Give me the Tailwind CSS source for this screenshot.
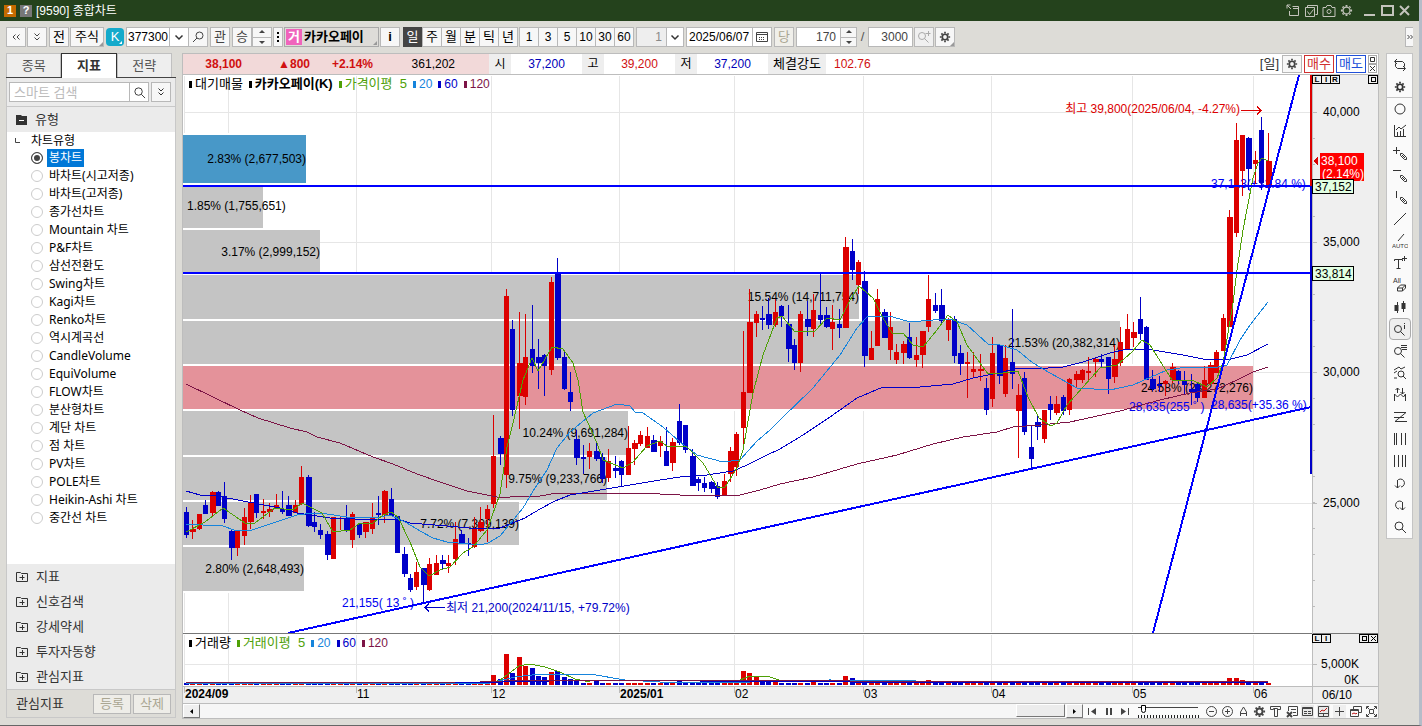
<!DOCTYPE html>
<html lang="ko">
<head>
    <meta charset="UTF-8">
    <meta name="viewport" content="width=device-width, initial-scale=1.0">
    <title>[9590] 종합차트</title>
    <script src="https://cdn.jsdelivr.net/npm/@tailwindcss/browser@4"></script>
</head>
<body class="bg-[#dddcd7] font-['Liberation_Sans','Noto_Sans_CJK_KR',sans-serif] text-xs text-black">
    <!-- Icon set -->
    <svg class="hidden">
        <defs>
            <symbol id="gear" viewBox="0 0 14 14"><g fill="none" stroke="currentColor"><circle cx="7" cy="7" r="3.2" stroke-width="2"/><path stroke-width="2" d="M7 1v2M7 11v2M1 7h2M11 7h2M2.8 2.8l1.4 1.4M9.8 9.8l1.4 1.4M11.2 2.8L9.8 4.2M4.2 9.8l-1.4 1.4"/></g></symbol>
            <symbol id="gear-thin" viewBox="0 0 14 14"><g fill="none" stroke="currentColor"><circle cx="7" cy="7" r="3.7" stroke-width="1.3"/><path stroke-width="2" d="M7 1v2M7 11v2M1 7h2M11 7h2M2.8 2.8l1 1M10.2 10.2l1 1M11.2 2.8l-1 1M3.8 10.2l-1 1"/></g></symbol>
            <symbol id="search" viewBox="0 0 14 14"><g fill="none" stroke="currentColor"><circle cx="6" cy="6" r="4"/><path d="M9 9l4 4"/></g></symbol>
            <symbol id="search-left" viewBox="0 0 14 14"><g fill="none" stroke="currentColor"><circle cx="8.5" cy="5.5" r="3.5"/><path d="M6 8l-4 4"/></g></symbol>
            <symbol id="dbl-down" viewBox="0 0 14 14"><path fill="none" stroke="currentColor" d="M4.5 3.5L7 6l2.500-2.500M4.500 7.500L7 10l2.500-2.500"/></symbol>
            <symbol id="dbl-left" viewBox="0 0 14 14"><path fill="none" stroke="currentColor" d="M6.500 4.500L4 7l2.500 2.500M10.500 4.500L8 7l2.500 2.500"/></symbol>
            <symbol id="dbl-right" viewBox="0 0 14 14"><path fill="none" stroke="currentColor" d="M4.500 5L6.500 7 4.500 9M7.500 5L9.500 7 7.500 9"/></symbol>
            <symbol id="chevron" viewBox="0 0 14 14"><path fill="none" stroke="currentColor" stroke-width="1.500" d="M3.500 5.500L7 9l3.500-3.500"/></symbol>
            <symbol id="plus-box" viewBox="0 0 12 12"><path fill="none" stroke="currentColor" d="M.5 1.500h4l1 1h6v8H.5zM3.500 6.500h5M6.500 4v5"/></symbol>
            <symbol id="corner" viewBox="0 0 4 4"><path fill="#999" d="M4 0v4H0z"/></symbol>
        </defs>
    </svg>

    <div class="flex min-h-screen flex-col border-r-[3px] border-b border-r-[#b5bcc8] border-b-[#666]">
        <!-- Title bar -->
        <header class="flex h-[21px] items-center bg-[#24421c] pr-2 pl-1 text-white">
            <span class="flex size-3 items-center justify-center bg-[#c46a00] text-[11px] font-bold">1</span>
            <span class="ml-1 flex size-3 items-center justify-center bg-[#777] text-[11px] font-bold">?</span>
            <h1 class="ml-1 text-xs">[9590] 종합차트</h1>
            <div class="ml-auto flex items-center gap-1 text-[#c4c4bc]">
                <button aria-label="분리"><svg class="size-[14px]" viewBox="0 0 14 14" fill="none" stroke="currentColor"><path d="M6.500 2.500h6v9h-9V7M7 4.500h6M1 1l4 4M1 4.500V1h3.500"/></svg></button>
                <button aria-label="저장"><svg class="size-[14px]" viewBox="0 0 14 14" fill="none" stroke="currentColor"><path d="M3.500 3.500v-2h10v9h-2M1.500 3.500h9v9h-9zM3.500 7.500l2 3 4-5"/></svg></button>
                <button aria-label="화면 캡처"><svg class="size-[14px]" viewBox="0 0 14 14" fill="none" stroke="currentColor"><path d="M1 12.500v-9h3l1-2h4l1 2h3v9z"/><circle cx="7" cy="7.500" r="2"/></svg></button>
                <button aria-label="설정"><svg class="size-[13px]"><use href="#gear-thin"/></svg></button>
                <button aria-label="최소화" class="ml-[6px]"><svg class="size-[13px]" viewBox="0 0 13 13"><path fill="currentColor" d="M1 10h11v2H1z"/></svg></button>
                <button aria-label="최대화" class="ml-px"><svg class="size-[13px]" viewBox="0 0 13 13" fill="none" stroke="currentColor" stroke-width="2"><path d="M1 2h11v9H1z"/></svg></button>
                <button aria-label="닫기"><svg class="size-[13px]" viewBox="0 0 13 13" fill="none" stroke="currentColor" stroke-width="2"><path d="M2 2l9 9M11 2l-9 9"/></svg></button>
            </div>
        </header>

        <!-- Toolbar -->
        <div class="flex h-8 items-center pl-[6px] text-[13px]">
            <button aria-label="이전" class="flex h-5 w-5 items-center justify-center border border-[#b8b8b8] bg-[#f7f7f7] text-[#444]"><svg class="size-[14px]"><use href="#dbl-left"/></svg></button>
            <button aria-label="펼치기" class="ml-px flex h-5 w-5 items-center justify-center border border-[#b8b8b8] bg-[#f7f7f7] text-[#444]"><svg class="size-[14px]"><use href="#dbl-down"/></svg></button>
            <button class="ml-[2px] h-5 w-5 border border-[#b8b8b8] bg-[#f7f7f7] leading-[18px]">전</button>
            <button class="relative ml-px h-5 w-[34px] border border-[#b8b8b8] bg-[#f7f7f7] leading-[18px]">주식<svg class="absolute right-0 bottom-0 size-1"><use href="#corner"/></svg></button>
            <button class="relative ml-[2px] h-[18px] w-[18px] rounded bg-[#14aacb] leading-[18px] text-white">K<svg class="absolute right-[2px] bottom-[2px] size-[3px]" viewBox="0 0 4 4"><path fill="#fff" d="M4 0v4H0z"/></svg></button>
            <input type="text" aria-label="종목코드" value="377300" class="ml-[2px] h-5 w-[44px] border border-[#b8b8b8] bg-white pl-px text-xs">
            <button aria-label="종목 목록" class="-ml-px flex h-5 w-5 items-center justify-center border border-[#b8b8b8] bg-white text-[#333]"><svg class="size-[14px]"><use href="#chevron"/></svg></button>
            <button aria-label="종목 찾기" class="-ml-px flex h-5 w-5 items-center justify-center border border-[#b8b8b8] bg-[#f7f7f7] text-[#444]"><svg class="size-[14px]"><use href="#search-left"/></svg></button>
            <button class="ml-[2px] h-5 w-5 border border-[#b8b8b8] bg-[#f7f7f7] leading-[18px] text-[#444]">관</button>
            <button class="ml-[2px] h-5 w-5 border border-[#b8b8b8] bg-[#f7f7f7] leading-[18px] text-[#444]">승</button>
            <div class="flex h-5 w-5 flex-col border border-[#b8b8b8] bg-[#f7f7f7] text-[#444]">
                <button aria-label="위" class="flex flex-1 items-center justify-center border-b border-[#b8b8b8]"><svg class="h-1 w-2" viewBox="0 0 8 4"><path fill="currentColor" d="M4 0l3 3H1z"/></svg></button>
                <button aria-label="아래" class="flex flex-1 items-center justify-center"><svg class="h-1 w-2" viewBox="0 0 8 4"><path fill="currentColor" d="M4 4l3-3H1z"/></svg></button>
            </div>
            <button aria-label="더보기" class="ml-px flex h-5 w-[10px] items-center justify-center border border-[#b8b8b8] bg-[#f7f7f7]"><svg class="h-3 w-[2px]" viewBox="0 0 2 12"><path d="M0 1h2v2H0zM0 5h2v2H0zM0 9h2v2H0z"/></svg></button>
            <button class="relative ml-px flex h-5 w-[95px] items-center overflow-hidden border border-[#a8a8a8] bg-[#dedcd8] font-bold"><span class="ml-px mr-[2px] flex h-4 w-4 items-center justify-center bg-[#f064bc] text-white">거</span>카카오페이<svg class="absolute right-px bottom-px size-1"><use href="#corner"/></svg></button>
            <button class="ml-px h-5 w-5 border border-[#b8b8b8] bg-[#f7f7f7] font-bold leading-[18px]">i</button>

            <!-- Period -->
            <div class="ml-[3px] flex">
                <button class="h-5 w-[19px] bg-[#444] text-white">일</button>
                <button class="h-5 w-[19px] border border-r-0 border-[#b8b8b8] bg-[#f7f7f7] leading-[18px]">주</button>
                <button class="h-5 w-[19px] border border-r-0 border-[#b8b8b8] bg-[#f7f7f7] leading-[18px]">월</button>
                <button class="h-5 w-[19px] border border-r-0 border-[#b8b8b8] bg-[#f7f7f7] leading-[18px]">분</button>
                <button class="h-5 w-[19px] border border-r-0 border-[#b8b8b8] bg-[#f7f7f7] leading-[18px]">틱</button>
                <button class="h-5 w-5 border border-[#b8b8b8] bg-[#f7f7f7] leading-[18px]">년</button>
            </div>
            <div class="ml-px flex text-xs">
                <button class="h-5 w-[19px] border border-r-0 border-[#b8b8b8] bg-[#f7f7f7]">1</button>
                <button class="h-5 w-[19px] border border-r-0 border-[#b8b8b8] bg-[#f7f7f7]">3</button>
                <button class="h-5 w-[19px] border border-r-0 border-[#b8b8b8] bg-[#f7f7f7]">5</button>
                <button class="h-5 w-[19px] border border-r-0 border-[#b8b8b8] bg-[#f7f7f7]">10</button>
                <button class="h-5 w-[19px] border border-r-0 border-[#b8b8b8] bg-[#f7f7f7]">30</button>
                <button class="h-5 w-5 border border-[#b8b8b8] bg-[#f7f7f7]">60</button>
            </div>
            <input type="text" aria-label="분 간격" value="1" disabled class="ml-[2px] h-5 w-[31px] border border-[#b8b8b8] bg-[#eee] pr-1 text-right text-xs text-[#888]">
            <button aria-label="분 간격 목록" class="-ml-px flex h-5 w-[18px] items-center justify-center border border-[#b8b8b8] bg-white text-[#333]"><svg class="size-[14px]"><use href="#chevron"/></svg></button>
            <input type="text" aria-label="기준일" value="2025/06/07" class="ml-[2px] h-5 w-[67px] border border-[#b8b8b8] bg-white pl-[2px] text-xs">
            <button aria-label="달력" class="-ml-px flex h-5 w-5 items-center justify-center border border-[#b8b8b8] bg-white text-[#444]"><svg class="size-3" viewBox="0 0 12 12" fill="none" stroke="currentColor"><path d="M.5 1.500h11v9H.5zM1 3.500h10"/><path stroke-dasharray="1 1" d="M3 6.500h6M3 8.500h6"/></svg></button>
            <button disabled class="ml-[2px] h-5 w-5 border border-[#b8b8b8] bg-[#f0efea] leading-[18px] text-[#aaa692]">당</button>
            <input type="text" aria-label="조회 개수" value="170" class="ml-[2px] h-5 w-[45px] border border-[#b8b8b8] bg-white pr-1 text-right text-xs text-[#444]">
            <div class="-ml-px flex h-5 w-[17px] flex-col border border-[#b8b8b8] bg-[#f7f7f7] text-[#444]">
                <button aria-label="늘리기" class="flex flex-1 items-center justify-center border-b border-[#b8b8b8]"><svg class="h-1 w-2" viewBox="0 0 8 4"><path fill="currentColor" d="M4 0l3 3H1z"/></svg></button>
                <button aria-label="줄이기" class="flex flex-1 items-center justify-center"><svg class="h-1 w-2" viewBox="0 0 8 4"><path fill="currentColor" d="M4 4l3-3H1z"/></svg></button>
            </div>
            <span class="w-[11px] text-center text-[#555]">/</span>
            <input type="text" aria-label="전체 개수" value="3000" class="h-5 w-[45px] border border-[#b8b8b8] bg-white pr-1 text-right text-xs text-[#444]">
            <button aria-label="추가 조회" class="ml-px flex h-5 w-5 items-center justify-center border border-[#b8b8b8] bg-[#f0f0f0] text-[#aaa]"><svg class="size-[14px]" viewBox="0 0 14 14" fill="none" stroke="currentColor"><circle cx="5" cy="6" r="3.500"/><path d="M7.500 8.500l4 4M8.500 3.500h5M11.500 1v5"/></svg></button>
            <button aria-label="차트 설정" class="relative ml-px flex h-5 w-5 items-center justify-center border border-[#b8b8b8] bg-[#f7f7f7] text-[#444]"><svg class="size-3"><use href="#gear"/></svg><svg class="absolute right-0 bottom-0 size-1"><use href="#corner"/></svg></button>
            <button aria-label="더 보기" class="ml-auto mr-[6px] flex h-5 w-2 items-center justify-center overflow-hidden border border-r-0 border-[#b8b8b8] bg-[#f7f7f7] text-[#444]"><svg class="size-[14px] shrink-0"><use href="#dbl-right"/></svg></button>
        </div>

        <div class="flex flex-1 items-start pl-[6px]">
            <!-- Sidebar -->
            <aside class="flex w-[170px] shrink-0 flex-col text-[#333]">
                <nav class="flex h-[25px] items-stretch border-b border-[#444] pr-1 text-[13px]">
                    <button class="flex-1 border border-b-0 border-[#c0c0c0] bg-[#eee] text-[#555]">종목</button>
                    <button class="-mb-px flex-1 border border-b-0 border-[#333] bg-white font-bold">지표</button>
                    <button class="flex-1 border border-b-0 border-[#c0c0c0] bg-[#eee] text-[#555]">전략</button>
                </nav>
                <div class="flex flex-col border-x border-b border-[#c8c8c8]">
                    <div class="flex items-center bg-[#ebebeb] py-1 pr-1 pl-[2px]">
                        <input type="text" aria-label="검색" placeholder="스마트 검색" class="h-5 w-0 flex-1 border border-[#b8b8b8] bg-white pl-1 text-[13px] placeholder:text-[#bbb]">
                        <button aria-label="검색" class="-ml-px flex h-5 w-5 items-center justify-center border border-[#b8b8b8] bg-white"><svg class="size-[13px]"><use href="#search"/></svg></button>
                        <button aria-label="펼치기" class="ml-[2px] flex h-5 w-5 items-center justify-center border border-[#b8b8b8] bg-[#f7f7f7]"><svg class="size-[14px]"><use href="#dbl-down"/></svg></button>
                    </div>
                    <h2 class="flex h-[26px] items-center border-t border-[#c8c8c8] bg-[#ebebeb] pl-[9px] text-[13px]">
                        <svg class="mr-2 h-[10px] w-[11px]" viewBox="0 0 11 10"><path fill="#333" d="M0 0h5l1 1h5v9H0z"/><path stroke="#fff" d="M3 5.500h5"/></svg>유형
                    </h2>
                    <div role="radiogroup" aria-labelledby="type-title" class="flex h-[432px] flex-col bg-white font-['Noto_Sans','Noto_Sans_CJK_KR',sans-serif] text-xs text-black">
                        <p class="flex h-[17px] items-center"><svg class="mr-[11px] ml-2 size-[5px]" viewBox="0 0 5 5"><path fill="none" stroke="#444" d="M.5 0v4.500H5"/></svg><span id="type-title">차트유형</span></p>
                        <div id="chart-types" class="pl-6"></div>
                    </div>
                    <ul class="bg-[#ebebeb] text-[13px]">
                        <li><button class="flex h-[25px] w-full items-center gap-2 pl-[9px]"><svg class="size-3"><use href="#plus-box"/></svg>지표</button></li>
                        <li><button class="flex h-[25px] w-full items-center gap-2 pl-[9px]"><svg class="size-3"><use href="#plus-box"/></svg>신호검색</button></li>
                        <li><button class="flex h-[25px] w-full items-center gap-2 pl-[9px]"><svg class="size-3"><use href="#plus-box"/></svg>강세약세</button></li>
                        <li><button class="flex h-[25px] w-full items-center gap-2 pl-[9px]"><svg class="size-3"><use href="#plus-box"/></svg>투자자동향</button></li>
                        <li><button class="flex h-[25px] w-full items-center gap-2 pl-[9px]"><svg class="size-3"><use href="#plus-box"/></svg>관심지표</button></li>
                    </ul>
                    <div class="flex h-[28px] items-center gap-[2px] border-t border-[#c8c8c8] pr-1 pl-[9px] text-[13px]">
                        <span class="mr-auto">관심지표</span>
                        <button disabled class="h-5 w-[38px] border border-[#b8b8b8] bg-[#eeede8] leading-[18px] text-[#aaa692]">등록</button>
                        <button disabled class="h-5 w-[38px] border border-[#b8b8b8] bg-[#eeede8] leading-[18px] text-[#aaa692]">삭제</button>
                    </div>
                </div>
            </aside>

            <!-- Chart window -->
            <main class="ml-[6px] flex min-w-0 flex-1 flex-col border border-[#bdbdbd] bg-white">
                <!-- Quote line -->
                <div class="flex h-[21px] items-stretch border-b border-[#bdbdbd] leading-5">
                    <div class="flex w-[306px] bg-[#f2d9d9]">
                        <b class="w-[59px] text-right text-[#d01010]">38,100</b>
                        <b class="w-[68px] text-right text-[#d01010]">▲800</b>
                        <b class="w-[63px] text-right text-[#d01010]">+2.14%</b>
                        <span class="w-[82px] text-right">361,202</span>
                    </div>
                    <span class="w-[22px] bg-[#eee] text-center">시</span><span class="w-[71px] text-center text-[#0000b8]">37,200</span>
                    <span class="w-[22px] bg-[#eee] text-center">고</span><span class="w-[71px] text-center text-[#d01010]">39,200</span>
                    <span class="w-[22px] bg-[#eee] text-center">저</span><span class="w-[71px] text-center text-[#0000b8]">37,200</span>
                    <span class="w-[58px] bg-[#eee] text-center text-[13px]">체결강도</span><span class="pl-2 text-[#d01010]">102.76</span>
                    <div class="ml-auto flex items-center gap-[2px] pr-px text-[13px]">
                        <span class="mr-px text-[#333]">[일]</span>
                        <button aria-label="설정" class="flex h-[18px] w-5 items-center justify-center border border-[#b8b8b8] bg-[#f7f7f7] text-[#444]"><svg class="size-3"><use href="#gear"/></svg></button>
                        <button class="h-[18px] w-[30px] border border-[#d03030] leading-4 text-[#d03030]">매수</button>
                        <button class="h-[18px] w-[30px] border border-[#2050d8] leading-4 text-[#2050d8]">매도</button>
                        <div class="flex flex-col">
                            <button aria-label="확대" class="flex h-[9px] w-[9px] items-center justify-center border border-[#aaa]"><svg class="size-[5px]" viewBox="0 0 5 5"><path fill="none" stroke="#333" d="M.5.5h4v4h-4z"/></svg></button>
                            <button aria-label="닫기" class="flex h-[9px] w-[9px] items-center justify-center border border-[#aaa]"><svg class="size-[5px]" viewBox="0 0 5 5"><path stroke="#333" d="M0 0l5 5M5 0L0 5"/></svg></button>
                        </div>
                    </div>
                </div>

                <!-- Price and volume panes -->
                <div class="relative">
                    <svg id="chart" class="block h-auto w-full" viewBox="183 75 1195 629" font-size="12"></svg>
                    <div class="absolute top-0 left-[6px] flex items-center gap-[6px] text-[13px] leading-[18px]">
                        <span class="flex items-center gap-[3px]"><i class="h-[7px] w-[3px] bg-black"></i>대기매물</span>
                        <b class="flex items-center gap-[3px]"><i class="h-[7px] w-[3px] bg-black"></i>카카오페이(K)</b>
                        <span class="flex items-center gap-[3px] text-[#4ea006]"><i class="h-[7px] w-[3px] bg-[#4ea006]"></i>가격이평&nbsp; 5</span>
                        <span class="flex items-center gap-[3px] text-xs text-[#1684dc]"><i class="h-[7px] w-[3px] bg-[#1684dc]"></i>20</span>
                        <span class="flex items-center gap-[3px] text-xs text-[#0000c8]"><i class="h-[7px] w-[3px] bg-[#0000c8]"></i>60</span>
                        <span class="flex items-center gap-[3px] text-xs text-[#7c1446]"><i class="h-[7px] w-[3px] bg-[#7c1446]"></i>120</span>
                    </div>
                    <div class="absolute bottom-[52px] left-[6px] flex items-center gap-[6px] text-[13px] leading-[18px]">
                        <span class="flex items-center gap-[3px]"><i class="h-[7px] w-[3px] bg-black"></i>거래량</span>
                        <span class="flex items-center gap-[3px] text-[#4ea006]"><i class="h-[7px] w-[3px] bg-[#4ea006]"></i>거래이평&nbsp; 5</span>
                        <span class="flex items-center gap-[3px] text-xs text-[#1684dc]"><i class="h-[7px] w-[3px] bg-[#1684dc]"></i>20</span>
                        <span class="flex items-center gap-[3px] text-xs text-[#0000c8]"><i class="h-[7px] w-[3px] bg-[#0000c8]"></i>60</span>
                        <span class="flex items-center gap-[3px] text-xs text-[#7c1446]"><i class="h-[7px] w-[3px] bg-[#7c1446]"></i>120</span>
                    </div>
                    <div class="absolute top-0 right-0 flex w-[66px] justify-between text-[8px] leading-[7px] font-bold">
                        <span class="flex"><button class="h-[9px] w-[10px] border border-black">L</button><button class="-ml-px h-[9px] w-[10px] border border-black">I</button><button class="-ml-px h-[9px] w-[10px] border border-black">R</button></span>
                        <button aria-label="확대" class="flex h-[9px] w-[10px] items-center justify-center border border-black"><i class="size-[5px] border border-black"></i></button>
                    </div>
                    <div class="absolute right-0 bottom-[61px] flex w-[66px] justify-between text-[8px] leading-[7px] font-bold">
                        <span class="flex"><button class="h-[9px] w-[10px] border border-black">L</button><button class="-ml-px h-[9px] w-[10px] border border-black">I</button></span>
                        <span class="flex"><button aria-label="확대" class="flex h-[9px] w-[10px] items-center justify-center border border-black"><i class="size-[5px] border border-black"></i></button><button aria-label="닫기" class="-ml-px flex h-[9px] w-[10px] items-center justify-center border border-black"><svg class="size-[5px]" viewBox="0 0 5 5"><path stroke="#000" d="M0 0l5 5M5 0L0 5"/></svg></button></span>
                    </div>
                </div>

                <!-- Scroll bar and view tools -->
                <div class="flex h-[14px] items-center bg-[#fafafa] text-[#444]">
                    <button aria-label="왼쪽" class="flex h-[14px] w-[17px] items-center justify-center border border-t-white border-r-[#777] border-b-[#777] border-l-white bg-[#efefef]"><svg class="size-[5px]" viewBox="0 0 5 5"><path d="M4 0v5L1 2.500z"/></svg></button>
                    <div class="flex h-[14px] flex-1 justify-end bg-[#f6f6f6]"><div class="h-[13px] w-[49px] border border-t-white border-r-[#777] border-b-[#777] border-l-white bg-[#ececec]"></div></div>
                    <button aria-label="오른쪽" class="ml-px flex h-[14px] w-[17px] items-center justify-center border border-t-white border-r-[#777] border-b-[#777] border-l-white bg-[#efefef]"><svg class="size-[5px]" viewBox="0 0 5 5"><path d="M1 0v5l3-2.500z"/></svg></button>
                    <button aria-label="처음" class="ml-1"><svg class="size-[11px]" viewBox="0 0 11 11"><path fill="currentColor" d="M1 2h1v7H1zM4 5.500L9 2v7z"/></svg></button>
                    <button aria-label="일시정지" class="ml-[5px]"><svg class="size-[11px]" viewBox="0 0 11 11"><path fill="currentColor" d="M3 2h2v7H3zM7 2h2v7H7z"/></svg></button>
                    <button aria-label="마지막" class="ml-[5px]"><svg class="size-[11px]" viewBox="0 0 11 11"><path fill="currentColor" d="M9 2h1v7H9zM7 5.500L2 2v7z"/></svg></button>
                    <label class="relative ml-2 flex h-[14px] w-[61px]">
                        <svg class="absolute inset-0 h-[14px] w-[61px]" viewBox="0 0 61 14" fill="none" stroke="#444"><path d="M0 3.500h60"/><path stroke-width="3" stroke-dasharray="1 2" d="M0 12.500h61" stroke="#222"/></svg>
                        <input type="range" aria-label="확대 비율" min="0" max="100" value="5" class="relative h-[10px] w-full appearance-none bg-transparent [&::-webkit-slider-thumb]:h-[8px] [&::-webkit-slider-thumb]:w-[5px] [&::-webkit-slider-thumb]:appearance-none [&::-webkit-slider-thumb]:rounded-b-sm [&::-webkit-slider-thumb]:border [&::-webkit-slider-thumb]:border-black [&::-webkit-slider-thumb]:bg-white">
                    </label>
                    <div class="ml-[6px] flex items-center gap-[3px]">
                        <button aria-label="축소"><svg class="size-[13px]" viewBox="0 0 13 13" fill="none" stroke="currentColor"><circle cx="6.500" cy="6.500" r="5"/><path d="M4 6.500h5"/></svg></button>
                        <button aria-label="확대"><svg class="size-[13px]" viewBox="0 0 13 13" fill="none" stroke="currentColor"><circle cx="6.500" cy="6.500" r="5"/><path d="M4 6.500h5M6.500 4v5"/></svg></button>
                        <button aria-label="글자"><svg class="size-[13px]" viewBox="0 0 13 13" fill="none" stroke="currentColor"><path d="M3.500 11V7l3-5 3 5v4M3.500 8.500h6"/></svg></button>
                        <button aria-label="설정"><svg class="size-[13px]"><use href="#gear"/></svg></button>
                        <button aria-label="도구"><svg class="size-[13px]" viewBox="0 0 13 13" fill="none" stroke="currentColor"><path d="M1.500 4.500v-3h10v3h-3v-1h-4v1zM5.500 4v7.500h3V4"/></svg></button>
                        <button aria-label="엑셀"><svg class="size-[13px]" viewBox="0 0 13 13" fill="none" stroke="currentColor"><path d="M3.500 6V1.500h9v9H8M6 4.500h5M8 7.500h3"/><path stroke-width="2" d="M2 7l5 5M7 7l-5 5"/></svg></button>
                        <button aria-label="표" class="bg-[#e8e8e8]"><svg class="size-[13px]" viewBox="0 0 13 13" fill="none" stroke="currentColor"><path d="M1.500 2.500h10v8h-10zM1 3.500h11M3 6.500h3M3 8.500h3M7 6.500h3M7 8.500h3"/></svg></button>
                        <button aria-label="차트" class="bg-[#e8e8e8]"><svg class="size-[13px]" viewBox="0 0 13 13" fill="none" stroke="currentColor"><path d="M1.500 1.500h10v10h-10zM1 8.500h11M6.500 8.500V12"/><path stroke="#c01818" d="M3 7l2-2 2 1 3-3"/></svg></button>
                        <button aria-label="십자선" class="bg-[#eee]"><svg class="size-[13px]" viewBox="0 0 13 13" stroke="currentColor"><path d="M2 6.500h9M6.500 2v9"/></svg></button>
                        <button aria-label="창 복사"><svg class="size-[13px]" viewBox="0 0 13 13" fill="none" stroke="currentColor"><path d="M4.500 4V1.500h8v6H10M1.500 4.500h8v7h-8zM1 5.500h9"/><path stroke="#c01818" d="M3 9l2-1 2 1 1-1"/></svg></button>
                        <button aria-label="전체 화면"><svg class="size-[13px]" viewBox="0 0 13 13" fill="none" stroke="currentColor"><path d="M1.500 4V1.500H4M9 1.500h2.500V4M11.500 9v2.500H9M4 11.500H1.500V9M4.500 4.500h4v4h-4zM2 2l2 2M11 2L9 4M2 11l2-2M11 11L9 9"/></svg></button>
                    </div>
                </div>
            </main>

            <!-- Drawing tools -->
            <div id="tools" class="mr-[6px] ml-[7px] flex w-[27px] shrink-0 flex-col items-center border border-[#c4c4c4] bg-[#fafafa] text-[#333]"></div>
        </div>
    </div>

    <script>
        // Chart type list
        const types = ['봉차트', '바차트(시고저종)', '바차트(고저종)', '종가선차트', 'Mountain 차트', 'P&amp;F차트', '삼선전환도', 'Swing차트', 'Kagi차트', 'Renko차트', '역시계곡선', 'CandleVolume', 'EquiVolume', 'FLOW차트', '분산형차트', '계단 차트', '점 차트', 'PV차트', 'POLE차트', 'Heikin-Ashi 차트', '중간선 차트'];
        document.getElementById('chart-types').innerHTML = types.map((name, i) => `
            <label class="flex h-[18px] items-center gap-1 leading-[18px]">
                <input type="radio" name="type" class="size-3 appearance-none rounded-full border border-[#ccc] bg-white checked:border-[#444] checked:bg-[#444] checked:shadow-[inset_0_0_0_2px_#fff]" ${i === 0 ? 'checked' : ''}>
                <span class="${i === 0 ? 'bg-[#0078d7] px-[2px] text-white' : 'px-[2px]'}">${name}</span>
            </label>`).join('');

        // Drawing tool icons, 16 x 16
        const pencil = 'M8.500 8.500h2l4 4v2h-2l-4-4zM10 10l3 3';
        const lens = '<circle cx="6" cy="8" r="3.500"/><path d="M8.500 10.500l4 4"/>';
        const tools = [
            ['새로고침', '<path d="M5 2L2.500 4.500 5 7M3 4.500h7.500l2 2v3M11 14l2.500-2.500L11 9M13 11.500H5.500l-2-2v-3"/>'],
            ['설정', '<use href="#gear" x="2" y="2" width="12" height="12"/>'],
            ['원', '<circle cx="8" cy="8" r="5"/>'],
            ['지표 차트', '<path d="M2.500 2v11.500H14M5.500 13v-4M8.500 13V8M11.500 13V6M4 7l3-3 2 2 5-4"/>'],
            ['십자 그리기', '<path d="M1 5.500h7M4.500 2v7"/><path d="' + pencil + '"/>'],
            ['수평선 그리기', '<path d="M1 3.500h8"/><path d="' + pencil + '"/>'],
            ['수직선 그리기', '<path d="M4.500 2v7"/><path d="' + pencil + '"/>'],
            ['추세선', '<path d="M2 14L14 2"/>'],
            ['자동 추세선', '<path d="M6 8l6-7"/><text x="0" y="15" font-size="6" stroke="none" fill="currentColor">AUTO</text>'],
            ['문자', '<path d="M2.500 6V4.500h8V6M6.500 5v8M4.500 13.500h4M12.500 1v5M10 3.500h5"/>'],
            ['전체 지우기', '<text x="1" y="6" font-size="7" stroke="none" fill="currentColor">All</text><path d="M5.500 11l3-3h5v3l-3 3h-5zM5.500 11h5v3M10.500 11l3-3"/>'],
            ['봉', '<path d="M5.500 3v11M11.500 2v11"/><path stroke-width="4" d="M4.500 6v6M11.500 4v6"/>'],
            ['정보', lens + '<path d="M12.500 2v1M12.500 4v4"/>'],
            ['목록', lens + '<path d="M9 2.500h6M9 4.500h6M10 6.500h5"/>'],
            ['패턴 검색', '<path d="M2 5l5-3 2 2 4-2M2 8l3-2M2 13h3"/><circle cx="9" cy="9" r="3"/><path d="M11 11l3 3"/>'],
            ['파동', '<path d="M2.500 14V7l3 3 3-3 3 3 2-3v7M5.500 6V1M3.500 3l2-2 2 2M10.500 1v6M8.500 5l2 2 2-2"/>'],
            ['Z 선', '<path d="M2 3.500h12L3 12.500h12M2 8.500h10"/>'],
            ['수직 격자', '<path d="M2.500 2v12M4.500 2v12M9.500 2v12M13.500 2v12"/>'],
            ['수직 등분', '<path d="M2.500 2v12M6.500 2v12M10.500 2v12M13.500 2v12"/>'],
            ['되돌리기', '<path d="M5 6a4 4 0 1 1 4 6M5.500 6v7M3 10.500L5.500 13 8 10.500"/>'],
            ['다시 실행', '<path d="M11 6a4 4 0 1 0-4 6M10.500 6v7M8 10.500l2.500 2.500 2.500-2.500"/>'],
            ['찾기', '<circle cx="7" cy="7" r="4"/><path d="M10 10l4 4"/>'],
        ];
        document.getElementById('tools').innerHTML = tools.map(([name, art], i) => `
            <button aria-label="${name}" class="${i === 1 ? 'flex h-[22px] w-full items-center justify-center border-b border-[#c4c4c4]' : i === 12 ? 'flex h-[22px] w-[22px] items-center justify-center rounded border border-[#aaa] bg-[#eee]' : 'flex h-[22px] w-full items-center justify-center'}">
                <svg class="size-4 shrink-0" viewBox="0 0 16 16" fill="none" stroke="currentColor">${art}</svg>
            </button>`).join('');

        // Candles: r = up, b = down; high, body top, body bottom, low (chart y)
        const candles = `b507,512,535,538 r520,529,532,539 r514,514,529,530 b500,505,514,514 r491,492,513,516 b491,492,506,506 b482,496,519,523 b529,531,548,560 r531,531,548,556 r508,517,536,545
            r495,502,522,529 b494,494,513,518 r499,511,513,519 r503,509,512,517 r494,505,508,508 b491,509,512,514 b496,505,516,516 r500,505,513,513 r466,477,504,505 b475,477,526,527
            b512,522,527,532 b524,530,535,539 b531,534,555,560 r517,517,559,559 r517,518,519,530 b505,519,530,532 r512,514,540,548 b524,524,535,538 r522,522,532,538 r503,518,529,534
            b496,513,515,525 r490,491,515,523 b488,499,516,516 b516,516,553,553 b547,554,574,577 b574,578,590,592 r562,572,587,590 b568,568,585,604 r558,564,590,591 r555,563,575,575
            b555,560,564,570 r555,563,566,573 r522,539,559,565 b530,534,544,544 b538,543,544,556 r517,528,547,548 r507,522,531,532 r505,509,519,542 r415,456,504,508 b436,438,454,465
            r289,296,475,488 b320,329,410,416 r312,363,396,429 r314,357,397,405 b305,349,366,373 b339,357,363,389 b354,355,366,396 r277,282,370,375 b258,273,358,360 b352,357,389,390
            b372,392,402,411 b430,439,458,465 b445,457,459,474 r443,451,457,469 b443,451,459,461 b453,457,479,483 r449,461,478,482 b456,468,471,478 b460,461,475,486 r426,448,475,475
            r440,443,449,465 r431,435,444,446 r427,436,448,448 b435,440,452,452 r436,441,446,457 b427,451,466,466 r438,442,463,471 b404,421,443,445 b425,425,450,453 b449,456,486,486
            b477,479,483,491 b477,483,488,492 b481,482,489,493 b482,486,497,499 r474,481,496,496 r447,451,474,482 r432,434,467,476 r331,392,428,445 r289,322,393,393 r311,314,323,337
            b306,318,320,330 b298,314,325,329 r299,312,325,327 b305,306,316,327 b305,324,349,362 b339,345,363,370 r311,314,363,372 b301,319,327,336 r294,310,329,337 b274,315,320,324
            b307,315,327,328 r305,322,329,350 b309,324,328,338 r237,247,328,328 b239,251,270,280 r260,262,285,294 b271,281,356,367 r331,348,360,360 r289,299,346,346 b309,312,338,338
            r312,327,350,360 r344,352,360,364 r341,344,353,364 b323,337,358,359 r337,355,360,367 r331,331,355,368 r275,299,327,332 b293,305,311,313 b289,305,321,324 r318,319,330,341
            b316,319,356,363 b345,353,364,375 r352,362,364,398 r352,369,372,377 r354,369,371,381 b378,388,410,415 r337,353,399,407 b344,345,376,384 r345,358,394,397 b309,362,374,389
            r384,395,411,458 b372,378,432,435 b425,447,459,470 b415,422,427,440 r410,410,439,443 b396,404,410,420 r396,404,413,415 b395,397,411,415 r378,379,410,415 r371,374,380,388
            r369,370,380,383 r357,371,373,382 r357,359,362,377 b354,359,362,367 b357,357,379,394 r345,359,377,383 r327,342,363,366 r314,329,350,350 r322,332,338,347 b297,319,334,340
            b326,327,380,380 b370,379,389,391 b376,384,386,392 r380,381,384,396 r363,367,380,383 b370,371,380,384 b371,380,385,395 b374,389,392,405 b382,384,398,402 r366,380,398,398
            r362,365,384,385 r350,352,373,373 r314,318,351,351 r210,217,327,327 r123,140,233,237 r135,135,171,196 b137,138,169,190 r151,160,164,184 b117,130,183,190 r133,161,185,188`.trim().split(/\s+/);

        // Volume bars that rise above the base height
        const tallVolume = { 48: 10, 49: 6, 50: 31, 51: 12, 52: 28, 53: 19, 54: 17, 55: 9, 56: 8, 57: 13, 58: 14, 59: 8, 60: 6, 61: 5, 64: 4, 77: 4, 86: 5, 87: 14, 88: 12, 89: 8, 90: 5, 91: 5, 92: 4, 98: 4, 103: 9, 104: 7, 105: 4, 108: 5, 116: 5, 118: 4, 149: 4, 162: 4, 163: 7, 164: 7, 165: 5, 166: 4, 167: 3, 168: 3, 169: 2 };

        const bands = [
            [135, 183, 306, '#4898c8', '2.83% (2,677,503)'], [187, 228, 263, '#c4c4c4', '1.85% (1,755,651)'], [230, 272, 320, '#c4c4c4', '3.17% (2,999,152)'],
            [275, 319, 859, '#c4c4c4', '15.54% (14,711,754)'], [321, 364, 1120, '#c4c4c4', '21.53% (20,382,314)'], [366, 409, 1253, '#e4929a', '24.58% (23,272,276)'],
            [411, 455, 628, '#c4c4c4', '10.24% (9,691,284)'], [457, 500, 607, '#c4c4c4', '9.75% (9,233,766)'], [502, 545, 519, '#c4c4c4', '7.72% (7,309,139)'], [547, 591, 304, '#c4c4c4', '2.80% (2,648,493)'],
        ];

        const averages = {
            '#7c1446': '186,384 240,410 258,418 290,428 307,432 317,437 340,443 373,457 393,464 417,474 440,482 467,491 497,497 510,497 540,496 557,493 640,493 680,495 740,495 760,490 780,484 813,477 857,464 897,455 933,444 963,437 997,432 1013,427 1040,425 1070,422 1120,411 1160,400 1190,393 1217,389 1237,380 1253,372 1268,367',
            '#0000c8': '186,491 200,495 217,496 243,501 280,508 297,513 330,518 347,518 363,520 380,519 397,519 410,523 447,526 480,529 500,528 525,518 540,509 555,501 570,495 600,490 660,480 680,477 707,475 733,471 747,465 767,455 780,449 803,435 830,417 857,398 883,387 890,388 920,387 953,384 973,378 1003,372 1017,368 1033,369 1063,367 1083,362 1110,353 1127,349 1147,349 1183,355 1203,359 1227,360 1247,355 1268,344',
            '#1684dc': '186,524 203,525 220,525 237,531 252,530 270,524 297,515 313,513 327,514 347,517 380,517 390,515 407,523 420,531 433,538 447,542 480,545 488,543 500,536 523,508 535,488 547,470 557,448 570,432 593,413 617,404 630,406 635,412 643,413 663,427 680,442 697,455 723,462 740,460 757,441 770,430 780,420 813,388 840,355 857,328 867,317 877,316 893,317 910,322 933,320 950,319 967,325 988,344 997,344 1017,350 1033,363 1050,373 1077,388 1110,390 1133,385 1167,370 1187,367 1213,368 1227,365 1240,340 1250,325 1268,302',
            '#4ea006': '186,532 205,522 223,508 245,523 255,523 275,508 293,510 302,503 322,513 333,532 350,530 360,523 373,523 383,515 391,512 398,517 410,542 420,567 429,576 440,570 450,567 463,553 473,547 487,530 500,494 507,447 513,423 523,380 532,358 538,371 552,347 563,349 573,363 578,380 583,412 597,443 603,460 623,468 633,462 647,446 660,441 667,446 687,447 703,463 718,488 725,487 737,468 743,450 753,393 763,355 777,318 782,316 795,332 815,331 827,318 840,320 850,300 859,286 873,298 883,318 892,333 903,333 913,345 923,347 937,330 948,315 957,322 967,345 988,374 1003,373 1018,371 1028,397 1039,418 1051,426 1057,423 1067,405 1083,387 1100,368 1117,365 1132,352 1142,340 1150,345 1172,380 1192,380 1207,387 1217,378 1223,363 1233,303 1237,270 1243,230 1253,178 1258,163 1262,158 1268,161',
        };

        const months = [[184, '2024/09'], [228, ''], [356, '11'], [491, '12'], [619, '2025/01'], [734, '02'], [863, '03'], [991, '04'], [1132, '05'], [1253, '06']];
        const colors = { r: '#dc0000', b: '#0000c8' };
        const rect = (x, y, w, h, fill) => `<rect x="${x}" y="${y}" width="${w}" height="${h}" fill="${fill}"/>`;
        const text = (x, y, s, fill = '#000', extra = '') => `<text x="${x}" y="${y}" fill="${fill}" ${extra}>${s}</text>`;
        const stroke = (d, color, w = 1) => `<path d="${d}" fill="none" stroke="${color}" stroke-width="${w}"/>`;

        let out = rect(1312, 75, 66, 629, '#efefef') + rect(183, 686, 1195, 18, '#efefef');
        out += '<g shape-rendering="crispEdges">';
        months.forEach(([x]) => { out += rect(x, 76, 1, 556, '#e6e6e6') + rect(x, 635, 1, 50, '#e6e6e6') + (x === 228 ? '' : rect(x, 687, 1, 6, '#bbb')); });
        [112, 242, 372, 503, 664].forEach(y => { out += rect(184, y, 1128, 1, '#e6e6e6') + rect(1313, y, 4, 1, '#bbb'); });
        for (let y = 138; y < 630; y += 26) out += rect(1313, y, 2, 1, '#bbb');
        bands.forEach(([top, bottom, right, fill]) => { out += rect(183, top - 2, right - 183, bottom - top + 4, '#fff') + rect(183, top, right - 183, bottom - top, fill); });
        out += '</g>';
        bands.forEach(([top, , right, , label]) => {
            out += right === 263 ? text(187, 210, label) : text(right, top + 26 + (top === 135 ? 2 : 0), label, '#000', 'text-anchor="end"');
        });
        // Price labels of the trend lines
        out += text(1129, 411, '28,635(255 ˚ )', '#0000f0') + text(1211, 188, '37,113(+32.84 %)', '#0000f0');
        out += '<g shape-rendering="crispEdges">';
        candles.forEach((candle, i) => {
            const [high, top, bottom, low] = candle.slice(1).split(',').map(Number);
            const color = colors[candle[0]];
            const x = Math.round(186 + 6.4 * i);
            const width = i % 3 === 1 ? 6 : 5;
            out += rect(x, high, 1, low - high, color) + rect(x - 2, top, width, Math.max(bottom - top, 1), color);
            const vol = tallVolume[i] || 2;
            out += rect(x - 2, 685 - vol, 5, vol, color);
        });
        Object.entries(averages).forEach(([color, points]) => { out += `<polyline points="${points}" fill="none" stroke="${color}"/>`; });
        // Volume averages
        out += stroke('M490 683L500 680 519 666 530 664 545 667 560 672 575 679 590 682M735 682L750 676 770 677 785 682', '#4ea006');
        out += stroke('M186 683H490L515 677 540 674 590 674 625 680 660 682H750L830 680 1000 682H1230L1268 681', '#1684dc');
        out += stroke('M186 682H480L530 680 700 680 850 681H1268', '#7c1446') + stroke('M455 683L550 681 700 681 850 682H1268', '#0000c8');
        // Trend and level lines
        out += stroke('M183 186H1311M183 273H1311M288 633L1311 407M1153 633L1299 75', '#0000ff', 2);
        out += rect(1310, 75, 2, 111, '#dc0000') + rect(1310, 186, 2, 288, '#0000c8');
        out += rect(183, 633, 1195, 1, '#777') + rect(183, 686, 1195, 1, '#bdbdbd') + rect(183, 703, 1195, 1, '#bdbdbd') + rect(1312, 75, 1, 629, '#bdbdbd');
        out += rect(1320, 153, 44, 28, '#ff0000') + '<path fill="#dc0000" d="M1313 161l5-5v10z"/>';
        out += stroke('M1241 110.500h20M1257 106.500l4 4-4 4', '#dc0000') + stroke('M425 607.500h20M429 603.500l-4 4 4 4', '#0000c8');
        out += '</g>';
        out += text(1240, 113, '최고 39,800(2025/06/04, -4.27%)', '#dc0000', 'text-anchor="end"') + text(446, 612, '최저 21,200(2024/11/15, +79.72%)', '#0000c8');
        out += text(342, 607, '21,155( 13 ˚ )', '#0000f0') + text(1211, 409, '28,635(+35.36 %)', '#0000f0');
        [['40,000', 116], ['35,000', 246], ['30,000', 376], ['25,000', 507]].forEach(([s, y]) => { out += text(1323, y, s); });
        out += text(1321, 165, '38,100', '#fff') + text(1322, 178, '(2.14%)', '#fff');
        [['37,152', 179], ['33,814', 266]].forEach(([s, y]) => { out += `<rect x="1312.5" y="${y}.5" width="41" height="14" fill="#e2ffe2" stroke="#000"/>` + text(1315, y + 12, s); });
        out += text(1359, 668, '5,000K', '#000', 'text-anchor="end"') + text(1359, 684, '0K', '#000', 'text-anchor="end"') + text(1322, 699, '06/10');
        months.forEach(([x, s]) => { out += text(x + 1, 698, s, '#000', s.length > 2 ? 'font-weight="bold"' : ''); });
        document.getElementById('chart').innerHTML = out;
    </script>
</body>
</html>
